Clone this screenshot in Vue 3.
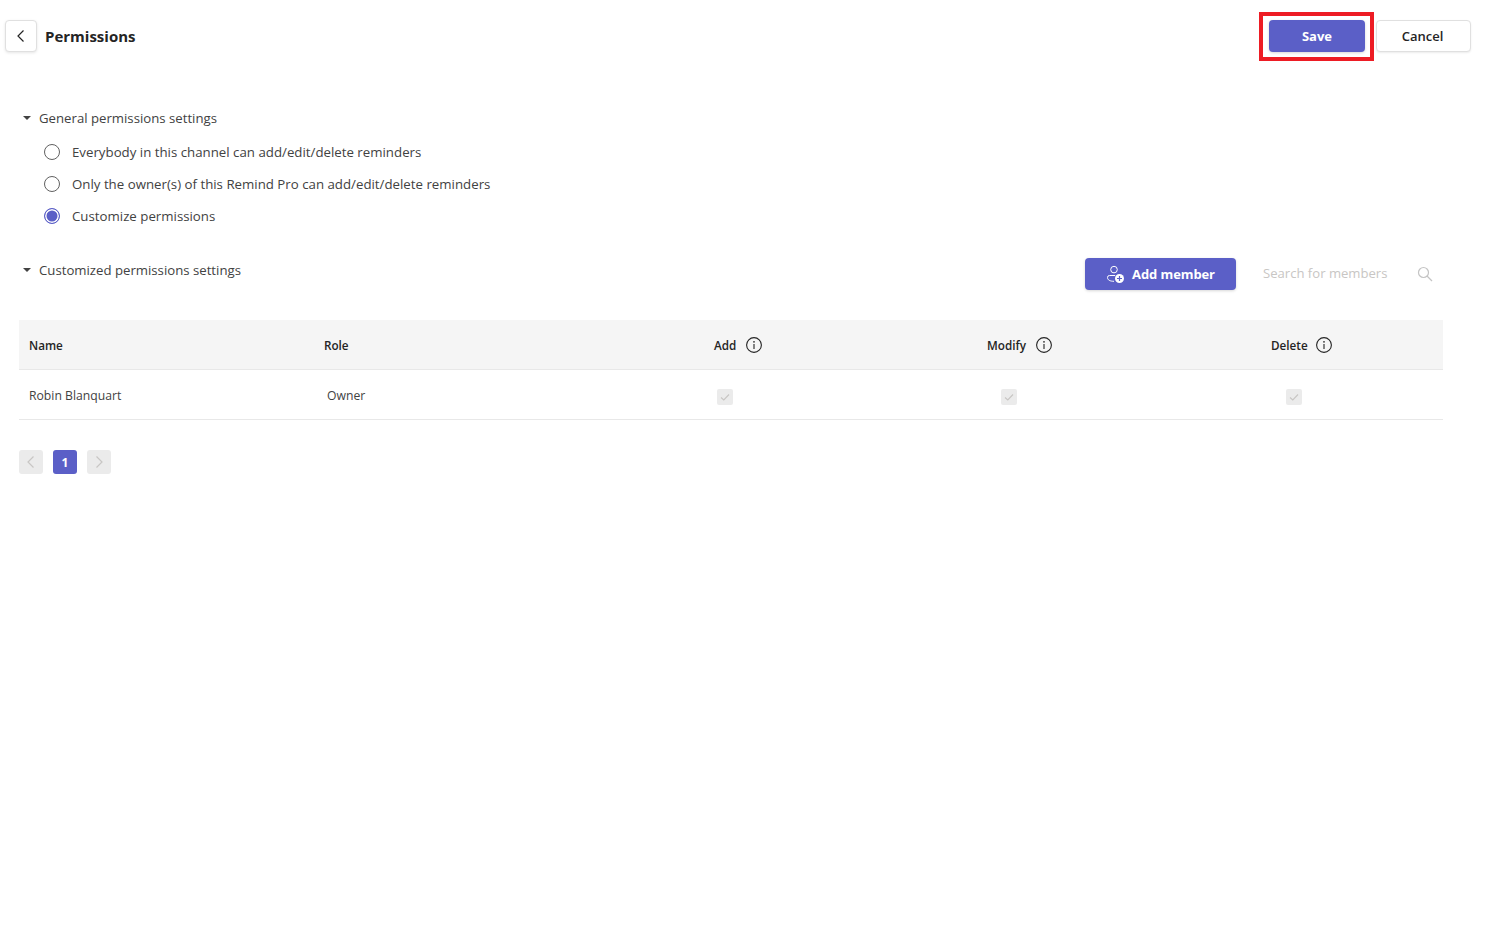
<script setup>
const options = [
  { label: 'Everybody in this channel can add/edit/delete reminders', checked: false },
  { label: 'Only the owner(s) of this Remind Pro can add/edit/delete reminders', checked: false },
  { label: 'Customize permissions', checked: true },
]
const perms = [
  { label: 'Add', cls: 'c-add' },
  { label: 'Modify', cls: 'c-modify' },
  { label: 'Delete', cls: 'c-delete' },
]
</script>

<template>
  <div class="page">
    <header class="top">
      <div class="top-left">
        <button class="back" aria-label="Back">
          <svg width="16" height="16" viewBox="0 0 16 16" fill="none"><path d="M10.5 2.5 5 8l5.500 5.500" stroke="#242424" stroke-width="1.200"/></svg>
        </button>
        <h1>Permissions</h1>
      </div>
      <div class="top-right">
        <div class="save-wrap">
          <button class="btn primary save">Save</button>
          <span class="highlight"></span>
        </div>
        <button class="btn cancel">Cancel</button>
      </div>
    </header>

    <section class="general">
      <div class="sec-title"><span class="caret"></span>General permissions settings</div>
      <label v-for="o in options" :key="o.label" class="radio-row">
        <span class="radio" :class="{ on: o.checked }"></span>{{ o.label }}
      </label>
    </section>

    <section class="custom">
      <div class="custom-head">
        <div class="sec-title"><span class="caret"></span>Customized permissions settings</div>
        <div class="tools">
          <button class="btn primary add">
            <svg width="19" height="19" viewBox="0 0 19 19" fill="none">
              <circle cx="8" cy="4.600" r="3.300" stroke="#fff" stroke-width="1"/>
              <path d="M9 10.500H3.500A2 2 0 0 0 1.500 12.500c0 2.500 2.500 3.800 6.500 3.800" stroke="#fff" stroke-width="1"/>
              <circle cx="13.500" cy="13.500" r="4.500" fill="#fff"/>
              <path d="M13.500 11v5M11 13.500h5" stroke="#5b5fc7" stroke-width="1.200"/>
            </svg>
            Add member
          </button>
          <span class="search">Search for members</span>
          <svg class="mag" width="16" height="16" viewBox="0 0 16 16" fill="none">
            <circle cx="6.500" cy="6.500" r="5" stroke="#c4c4c4" stroke-width="1.200"/>
            <path d="m10 10 5 5" stroke="#c4c4c4" stroke-width="1.200"/>
          </svg>
        </div>
      </div>

      <div class="table">
        <div class="row head">
          <div class="cell">Name</div>
          <div class="cell">Role</div>
          <div v-for="p in perms" :key="p.label" class="cell perm" :class="p.cls + '-h'">
            {{ p.label }}
            <svg width="16" height="16" viewBox="0 0 16 16" fill="none">
              <circle cx="8" cy="8" r="7.400" stroke="#242424" stroke-width="1.100"/>
              <circle cx="8" cy="4.800" r=".85" fill="#242424"/>
              <path d="M8 7v5" stroke="#242424" stroke-width="1.100"/>
            </svg>
          </div>
        </div>
        <div class="row body">
          <div class="cell">Robin Blanquart</div>
          <div class="cell role">Owner</div>
          <div v-for="p in perms" :key="p.label" class="cell" :class="p.cls">
            <span class="check">
              <svg width="14" height="14" viewBox="0 0 14 14" fill="none"><path d="m3 7.500 2.800 2.500L11 4.500" stroke="#c8c6c4" stroke-width="1.100"/></svg>
            </span>
          </div>
        </div>
      </div>

      <nav class="pager">
        <span class="pg off"><svg width="12" height="14" viewBox="0 0 12 14" fill="none"><path d="M8.500 1.500 3 7l5.500 5.500" stroke="#c8c6c4" stroke-width="1.200"/></svg></span>
        <span class="pg cur">1</span>
        <span class="pg off"><svg width="12" height="14" viewBox="0 0 12 14" fill="none"><path d="M3.500 1.500 9 7l-5.500 5.500" stroke="#c8c6c4" stroke-width="1.200"/></svg></span>
      </nav>
    </section>
  </div>
</template>

<style>
html, body { background: #fff; }
</style>

<style scoped>
.page {
  min-height: 950px;
  box-sizing: border-box;
  background: #fff;
  color: #424242;
  font-family: "Open Sans", "Noto Sans", sans-serif;
  font-size: 13.2px;
  padding: 20px 15px 0 5px;
}
button { font-family: inherit; padding: 0; cursor: pointer; }
.top { display: flex; justify-content: space-between; height: 32px; }
.top-left { display: flex; align-items: center; gap: 8px; }
.top-right { display: flex; gap: 11px; }
h1 { margin: 0; font-size: 15px; font-weight: 700; color: #242424; }
.back {
  width: 32px; height: 32px; box-sizing: border-box;
  display: flex; align-items: center; justify-content: center;
  background: #fff; border: 1px solid #e0e0e0; border-radius: 4px;
  box-shadow: 0 1px 3px rgba(0,0,0,.1);
}
.btn {
  height: 32px; box-sizing: border-box; border-radius: 4px;
  font-size: 13px; font-weight: 600;
  box-shadow: 0 1px 3px rgba(0,0,0,.16);
}
.primary { background: #5b5fc7; color: #fff; border: none; }
.save { width: 96px; display: block; font-weight: 700; }
.cancel { width: 95px; background: #fff; color: #242424; border: 1px solid #e0e0e0; box-shadow: 0 1px 2px rgba(0,0,0,.08); padding-right: 2px; }
.save-wrap { position: relative; }
.highlight {
  position: absolute; left: -10px; top: -8px; width: 115px; height: 49px;
  box-sizing: border-box; border: 4px solid #ed1c24; pointer-events: none;
}
.general { margin-top: 57px; padding-left: 14px; }
.sec-title { display: flex; align-items: center; height: 18px; color: #424242; padding-left: 4px; }
.caret {
  width: 0; height: 0; margin-right: 8px;
  border-left: 4px solid transparent; border-right: 4px solid transparent;
  border-top: 4px solid #424242;
}
.radio-row { display: flex; align-items: center; height: 32px; padding-left: 25px; gap: 12px; font-size: 13.27px; }
.general .sec-title { margin-bottom: 9px; }
.radio {
  width: 16px; height: 16px; box-sizing: border-box; border-radius: 50%;
  border: 1.500px solid #616161; background: #fff; flex: none;
}
.radio.on { border: 1.500px solid #5b5fc7; background: #5b5fc7; box-shadow: inset 0 0 0 1.500px #fff; }
.custom { margin-top: 26px; padding-left: 14px; }
.custom-head { display: flex; justify-content: space-between; width: 1424px; height: 32px; }
.custom-head .sec-title { margin-top: 3px; }
.tools { display: flex; align-items: center; padding-right: 10px; }
.add {
  width: 151px; display: flex; align-items: center; justify-content: center; gap: 7px;
  font-size: 13px; font-weight: 700; letter-spacing: -.1px;
}
.search { margin-left: 27px; width: 154px; color: #c8c6c4; font-size: 13.1px; margin-bottom: 2px; }
.table { width: 1424px; margin-top: 30px; }
.row {
  display: grid; grid-template-columns: 295px 390px 273px 284px 1fr;
  height: 50px; box-sizing: border-box; padding: 2px 0 0 10px; align-items: center;
  border-bottom: 1px solid #e8e8e8; font-size: 12.2px; color: #424242;
}
.head { background: #f5f5f5; color: #242424; font-weight: 600; font-size: 11.7px; padding-top: 0; }
.perm { display: flex; align-items: center; gap: 10px; }
.c-delete-h { gap: 8px; }
.role { padding-left: 3px; }
.c-add { padding-left: 3px; }
.c-modify { padding-left: 14px; }
.c-delete { padding-left: 15px; }
.check {
  width: 16px; height: 16px; margin-top: 2px; display: flex; align-items: center; justify-content: center;
  background: #ebebeb; border-radius: 2px;
}
.pager { display: flex; gap: 10px; margin-top: 30px; }
.pg {
  width: 24px; height: 24px; border-radius: 3px;
  display: flex; align-items: center; justify-content: center;
  font-size: 12px; font-weight: 700;
}
.off { background: #ebebeb; }
.cur { background: #5b5fc7; color: #fff; }
</style>
